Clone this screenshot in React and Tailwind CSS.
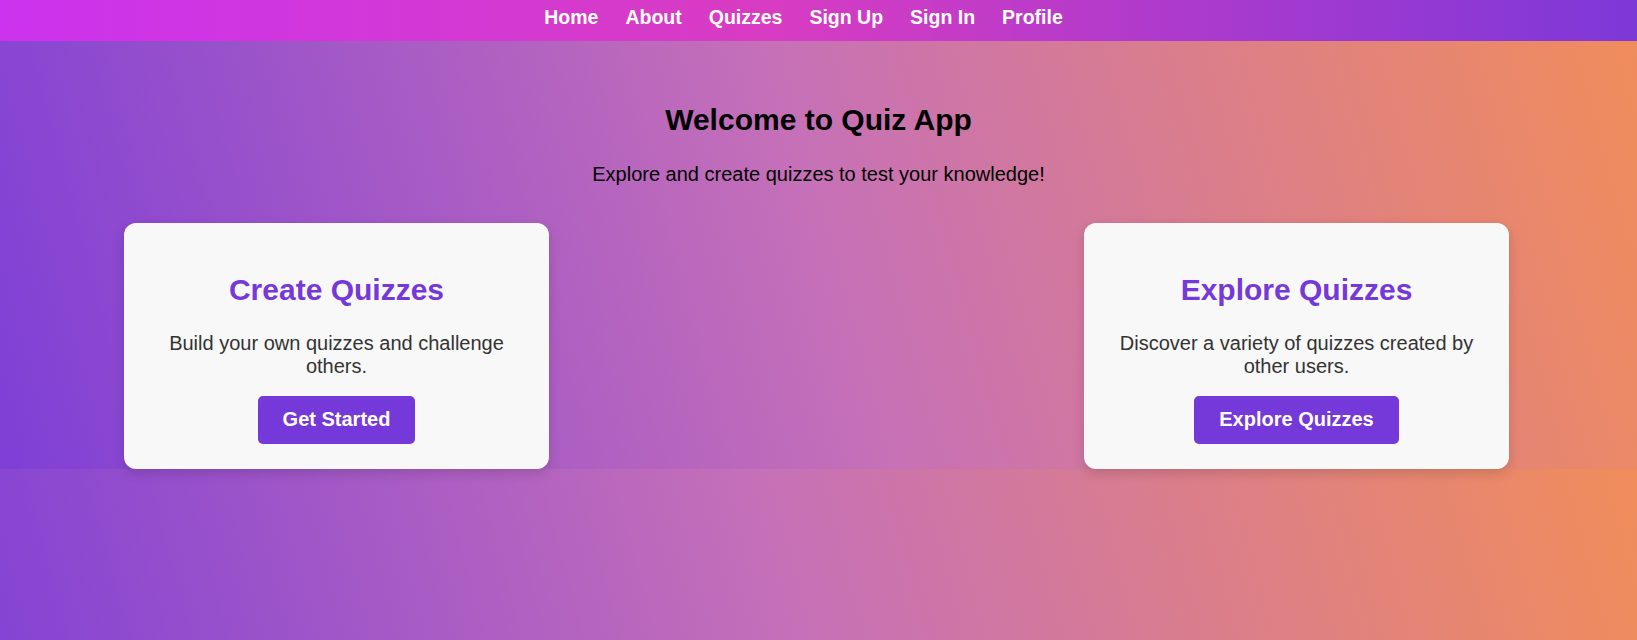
/**
 * Quiz App landing page
 */

const navLinks = ['Home', 'About', 'Quizzes', 'Sign Up', 'Sign In', 'Profile'];

function FeatureCard({ title, text, action }) {
    return (
        <div className="w-[425px] bg-[#f8f8f8] rounded-[12px] px-[24px] pt-[50px] pb-[25px] flex flex-col items-center text-center shadow-[0_4px_12px_rgba(0,0,0,0.15)]">
            <h2 className="text-[30px] leading-[34.5px] font-bold text-[#7538d9] mb-[25px]">{title}</h2>
            <p className="text-[20px] leading-[23px] text-[#333]">{text}</p>
            <button className="mt-[18px] bg-[#7538d9] text-white font-bold text-[20px] leading-[23px] px-[25px] pt-3 pb-[13px] rounded-[5px]">
                {action}
            </button>
        </div>
    );
}

export default function App() {
    return (
        <div className="min-h-screen font-['Liberation_Sans',Arial,sans-serif] bg-[linear-gradient(75deg,#7e3fd6_0%,#c670b8_50%,#f18d5a_100%)] bg-[length:100%_469px] bg-repeat">
            {/* Top navigation */}
            <nav className="h-[41px] pt-[6px] pr-[30px] flex justify-center gap-[27px] bg-[linear-gradient(to_right,#cc33ee_0%,#d83cc2_47%,#7d38d8_100%)]">
                {navLinks.map((link) => (
                    <a key={link} href="#" className="text-white font-bold text-[19.5px] leading-[22.4px]">
                        {link}
                    </a>
                ))}
            </nav>

            {/* Hero */}
            <section className="pt-[62px] flex flex-col items-center">
                <h1 className="text-[30px] leading-[34.5px] font-bold text-black">Welcome to Quiz App</h1>
                <p className="mt-[25px] text-[20px] leading-[23px] text-black">
                    Explore and create quizzes to test your knowledge!
                </p>

                <div className="mt-[37px] w-full flex justify-between pl-[124px] pr-[128px]">
                    <FeatureCard
                        title="Create Quizzes"
                        text="Build your own quizzes and challenge others."
                        action="Get Started"
                    />
                    <FeatureCard
                        title="Explore Quizzes"
                        text="Discover a variety of quizzes created by other users."
                        action="Explore Quizzes"
                    />
                </div>
            </section>
        </div>
    );
}
